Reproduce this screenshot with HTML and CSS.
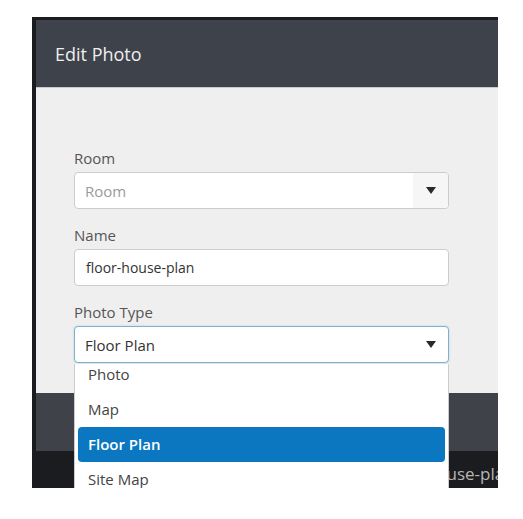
FILE: index.html
```html
<!DOCTYPE html>
<html>
<head>
<meta charset="utf-8">
<link rel="stylesheet" href="styles.css">
</head>
<body>
<div class="shot">
  <div class="modal">
    <div class="modal-header">Edit Photo</div>
    <div class="modal-body">
      <div class="group">
        <label class="label">Room</label>
        <div class="select">
          <span class="placeholder">Room</span>
          <span class="arrow-box gray"><span class="arrow"></span></span>
        </div>
      </div>
      <div class="group">
        <label class="label">Name</label>
        <div class="input">floor-house-plan</div>
      </div>
      <div class="group">
        <label class="label">Photo Type</label>
        <div class="select focused">
          <span class="value">Floor Plan</span>
          <span class="arrow-box"><span class="arrow"></span></span>
        </div>
      </div>
    </div>
    <div class="modal-footer"></div>
  </div>
  <div class="backdrop-row"><span class="bg-text">floor-house-plan</span></div>
  <div class="dropdown">
    <div class="dropdown-inner">
      <div class="option">Photo</div>
      <div class="option">Map</div>
      <div class="option selected">Floor Plan</div>
      <div class="option">Site Map</div>
    </div>
  </div>
</div>
</body>
</html>
```

FILE: styles.css
```css
html, body {
  margin: 0;
  padding: 0;
  background: #ffffff;
}

body {
  font-family: "Open Sans", "Noto Sans", sans-serif;
}

.shot {
  position: relative;
  margin: 17px 0 0 32px;
  width: 466px;
  height: 471px;
  box-sizing: border-box;
  padding: 3px 0 0 4px;
  background: #1b1c1f;
  overflow: hidden;
}

.modal {
  width: 462px;
}

.modal-header {
  height: 67px;
  background: #3e424b;
  color: #eeeeef;
  font-size: 18px;
  display: flex;
  align-items: center;
  padding-left: 19px;
  border-bottom: 1px solid #c9cbd0;
}

.modal-body {
  height: 305px;
  box-sizing: border-box;
  background: #efefef;
  padding: 60px 49px 0 38px;
}

.group {
  margin-bottom: 16px;
}

.label {
  display: block;
  height: 20px;
  line-height: 20px;
  margin-bottom: 4px;
  font-size: 15px;
  color: #555555;
}

.select, .input {
  height: 37px;
  box-sizing: border-box;
  border: 1px solid #cccccc;
  border-radius: 4px;
  background: #ffffff;
  display: flex;
  align-items: center;
  font-size: 15px;
  color: #333333;
  overflow: hidden;
}

.input {
  padding-left: 11px;
  font-size: 14px;
}

.placeholder, .value {
  flex: 1;
  padding-left: 10px;
}

.placeholder {
  color: #9a9a9a;
}

.arrow-box {
  width: 35px;
  height: 100%;
  display: flex;
  align-items: center;
  justify-content: center;
}

.arrow-box.gray {
  background: #f6f6f6;
}

.arrow {
  width: 0;
  height: 0;
  border-left: 5px solid transparent;
  border-right: 5px solid transparent;
  border-top: 7px solid #2a2a2a;
}

.select.focused {
  border-color: #7fb2c8;
  box-shadow: 0 0 2px rgba(102, 175, 233, 0.5);
}

.modal-footer {
  height: 58px;
  background: #3f4249;
}

.backdrop-row {
  height: 36px;
  box-sizing: border-box;
  display: flex;
  align-items: flex-end;
  padding-left: 347px;
  padding-bottom: 2px;
  color: #b5b5b5;
  font-size: 17px;
  white-space: nowrap;
}

.dropdown {
  position: absolute;
  left: 42px;
  top: 347px;
  width: 375px;
  height: 140px;
  box-sizing: border-box;
  background: #ffffff;
  border: 1px solid #cccccc;
  border-top: none;
  overflow: hidden;
}

.dropdown-inner {
  margin-top: -7px;
}

.option {
  height: 35px;
  line-height: 35px;
  padding-left: 13px;
  font-size: 15px;
  color: #444444;
}

.option.selected {
  margin: 0 3px;
  padding-left: 10px;
  background: #0b77c0;
  color: #ffffff;
  font-weight: 600;
  border-radius: 4px;
}
```
